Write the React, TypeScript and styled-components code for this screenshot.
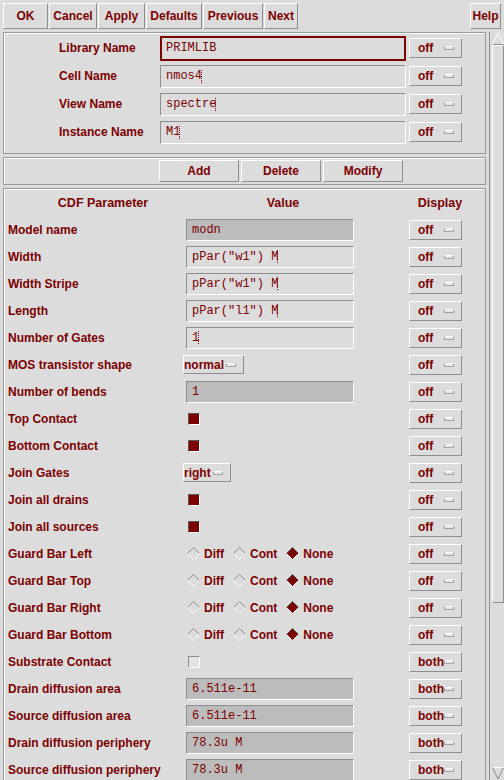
import React from "react"
import styled, { createGlobalStyle } from "styled-components"

const MAROON = "#7b0000"
const BG = "#dcdcdc"
const SHADE = "#8e8e8e"
const HILITE = "#ffffff"
const DISABLED = "#bcbcbc"

const GlobalStyle = createGlobalStyle`
  html, body {
    margin: 0;
    padding: 0;
    background: ${BG};
  }
  body {
    font-family: "Liberation Sans", Arial, sans-serif;
  }
`

const Window = styled.div`
  width: 504px;
  height: 780px;
  overflow: hidden;
  background: ${BG};
  color: ${MAROON};
  font: bold 12px "Liberation Sans", Arial, sans-serif;
  display: flex;
  flex-direction: column;
`

const Toolbar = styled.div`
  height: 32px;
  flex: none;
  box-sizing: border-box;
  display: flex;
  align-items: flex-start;
  gap: 1px;
  padding: 3px 3px 0 3px;
`

const Raised = styled.div`
  box-sizing: border-box;
  background: ${BG};
  border: 1px solid;
  border-color: ${HILITE} ${SHADE} ${SHADE} ${HILITE};
  color: ${MAROON};
  font: bold 12px "Liberation Sans", Arial, sans-serif;
`

const ToolButton = styled(Raised)<{ $w: number; $push?: boolean }>`
  width: ${(p) => p.$w}px;
  height: 26px;
  margin-left: ${(p) => (p.$push ? "auto" : "0")};
  display: flex;
  align-items: center;
  justify-content: center;
`

const Body = styled.div`
  flex: 1;
  min-height: 0;
  display: flex;
`

const Main = styled.div`
  width: 486px;
  box-sizing: border-box;
  padding-left: 3px;
  display: flex;
  flex-direction: column;
  gap: 3px;
`

const Panel = styled.div`
  box-sizing: border-box;
  border: 1px solid #9a9a9a;
  box-shadow: inset 1px 1px 0 ${HILITE};
`

const NamePanel = styled(Panel)`
  height: 122px;
  flex: none;
  padding-top: 1px;
  display: grid;
  grid-template-columns: 153px 246px 53px;
  grid-auto-rows: 28px;
  column-gap: 3px;
  align-items: center;
`

const NameLabel = styled.div`
  padding-left: 55px;
`

const ActionBar = styled(Panel)`
  height: 28px;
  flex: none;
  display: flex;
  align-items: center;
  gap: 2px;
  padding-left: 155px;
`

const ActionButton = styled(Raised)`
  width: 80px;
  height: 22px;
  display: flex;
  align-items: center;
  justify-content: center;
`

const ParamPanel = styled(Panel)`
  flex: 1;
  min-height: 0;
  border-bottom: none;
`

const HeaderRow = styled.div`
  height: 27px;
  display: flex;
  align-items: center;
  font-size: 12.5px;
`

const HeaderCell = styled.div<{ $w: number; $ml?: number }>`
  width: ${(p) => p.$w}px;
  margin-left: ${(p) => p.$ml ?? 0}px;
  text-align: center;
`

const ParamRow = styled.div`
  height: 27px;
  display: grid;
  grid-template-columns: 179px 226px 53px;
  align-items: center;
`

const ParamLabel = styled.div`
  padding-left: 4px;
  white-space: nowrap;
`

const ValueCell = styled.div`
  display: flex;
  align-items: center;
`

const TextField = styled.div<{ $w: number; $h: number; $disabled?: boolean; $focus?: boolean; $ml?: number }>`
  box-sizing: border-box;
  width: ${(p) => p.$w}px;
  height: ${(p) => p.$h}px;
  margin-left: ${(p) => p.$ml ?? 0}px;
  background: ${(p) => (p.$disabled ? DISABLED : BG)};
  border: ${(p) => (p.$focus ? `2px solid ${MAROON}` : "1px solid")};
  border-color: ${(p) => (p.$focus ? MAROON : `${SHADE} ${HILITE} ${HILITE} ${SHADE}`)};
  font: 12px "Liberation Mono", "Courier New", monospace;
  color: ${MAROON};
  padding-left: ${(p) => (p.$focus ? 4 : 5)}px;
  display: flex;
  align-items: center;
  white-space: pre;
`

const Caret = styled.span`
  display: inline-block;
  width: 0;
  height: 13px;
  margin-left: -1px;
  border-left: 1px dotted ${MAROON};
`

const MenuButton = styled(Raised)<{ $w: number; $h: number; $pad: number }>`
  width: ${(p) => p.$w}px;
  height: ${(p) => p.$h}px;
  display: flex;
  align-items: center;
  justify-content: space-between;
  padding: 0 7px 0 ${(p) => p.$pad}px;
`

const Indicator = styled.span`
  width: 10px;
  height: 4px;
  box-sizing: border-box;
  border: 1px solid #a2a2a2;
  border-top-color: ${HILITE};
  background: #e6e6e6;
`

const CheckBox = styled.span<{ $on: boolean }>`
  box-sizing: border-box;
  width: 12px;
  height: 12px;
  margin-left: 5px;
  border: 1px solid;
  border-color: ${(p) => (p.$on ? `#5a5a5a ${HILITE} ${HILITE} #5a5a5a` : `${SHADE} ${HILITE} ${HILITE} ${SHADE}`)};
  background: ${(p) => (p.$on ? MAROON : "#e4e4e4")};
`

const RadioGroup = styled.div`
  display: flex;
  align-items: center;
  margin-left: 4px;
`

const RadioItem = styled.span`
  display: flex;
  align-items: center;
  gap: 4px;
  margin-right: 9px;
`

const ScrollBar = styled.div`
  width: 15px;
  margin-left: 3px;
  box-sizing: border-box;
  border-left: 1px solid ${SHADE};
  padding-left: 2px;
  display: flex;
  flex-direction: column;
`

const Thumb = styled.div`
  height: 558px;
  box-sizing: border-box;
  border: 1px solid;
  border-color: ${HILITE} ${SHADE} ${SHADE} ${HILITE};
`

const Arrow = styled.svg`
  display: block;
  flex: none;
`

const Spacer = styled.div`
  flex: 1;
`

const Diamond: React.FC<{ on: boolean }> = ({ on }) => (
  <svg width="13" height="13" viewBox="0 0 13 13">
    <polygon points="6.5,0.5 12.5,6.5 6.5,12.5 0.5,6.5" fill={on ? MAROON : BG} />
    <polyline points="0.5,6.5 6.5,0.5 12.5,6.5" fill="none" stroke={on ? "#4a4a4a" : SHADE} strokeWidth="1" />
    <polyline points="12.5,6.5 6.5,12.5 0.5,6.5" fill="none" stroke={HILITE} strokeWidth="1" />
  </svg>
)

const DisplayMenu: React.FC<{ value: string }> = ({ value }) => (
  <MenuButton $w={53} $h={20} $pad={8}>
    <span>{value}</span>
    <Indicator />
  </MenuButton>
)

type Param =
  | { label: string; kind: "field"; value: string; disabled?: boolean; caret?: boolean; display: string }
  | { label: string; kind: "cycle"; value: string; w: number; display: string }
  | { label: string; kind: "check"; on: boolean; display: string }
  | { label: string; kind: "radio"; display: string }

const params: Param[] = [
  { label: "Model name", kind: "field", value: "modn", disabled: true, display: "off" },
  { label: "Width", kind: "field", value: 'pPar("w1") M', caret: true, display: "off" },
  { label: "Width Stripe", kind: "field", value: 'pPar("w1") M', caret: true, display: "off" },
  { label: "Length", kind: "field", value: 'pPar("l1") M', caret: true, display: "off" },
  { label: "Number of Gates", kind: "field", value: "1", caret: true, display: "off" },
  { label: "MOS transistor shape", kind: "cycle", value: "normal", w: 61, display: "off" },
  { label: "Number of bends", kind: "field", value: "1", disabled: true, display: "off" },
  { label: "Top Contact", kind: "check", on: true, display: "off" },
  { label: "Bottom Contact", kind: "check", on: true, display: "off" },
  { label: "Join Gates", kind: "cycle", value: "right", w: 48, display: "off" },
  { label: "Join all drains", kind: "check", on: true, display: "off" },
  { label: "Join all sources", kind: "check", on: true, display: "off" },
  { label: "Guard Bar Left", kind: "radio", display: "off" },
  { label: "Guard Bar Top", kind: "radio", display: "off" },
  { label: "Guard Bar Right", kind: "radio", display: "off" },
  { label: "Guard Bar Bottom", kind: "radio", display: "off" },
  { label: "Substrate Contact", kind: "check", on: false, display: "both" },
  { label: "Drain diffusion area", kind: "field", value: "6.511e-11", disabled: true, display: "both" },
  { label: "Source diffusion area", kind: "field", value: "6.511e-11", disabled: true, display: "both" },
  { label: "Drain diffusion periphery", kind: "field", value: "78.3u M", disabled: true, display: "both" },
  { label: "Source diffusion periphery", kind: "field", value: "78.3u M", disabled: true, display: "both" },
]

const renderValue = (p: Param) => {
  switch (p.kind) {
    case "field":
      return (
        <TextField $w={168} $h={22} $ml={3} $disabled={p.disabled}>
          {p.value}
          {p.caret && <Caret />}
        </TextField>
      )
    case "cycle":
      return (
        <MenuButton $w={p.w} $h={19} $pad={0}>
          <span>{p.value}</span>
          <Indicator />
        </MenuButton>
      )
    case "check":
      return <CheckBox $on={p.on} />
    case "radio":
      return (
        <RadioGroup>
          {["Diff", "Cont", "None"].map((o) => (
            <RadioItem key={o}>
              <Diamond on={o === "None"} />
              {o}
            </RadioItem>
          ))}
        </RadioGroup>
      )
  }
}

const names = [
  { label: "Library Name", value: "PRIMLIB", focus: true },
  { label: "Cell Name", value: "nmos4", caret: true },
  { label: "View Name", value: "spectre", caret: true },
  { label: "Instance Name", value: "M1", caret: true },
]

const App: React.FC = () => (
  <Window>
    <GlobalStyle />
    <Toolbar>
      <ToolButton $w={45}>OK</ToolButton>
      <ToolButton $w={48}>Cancel</ToolButton>
      <ToolButton $w={47}>Apply</ToolButton>
      <ToolButton $w={56}>Defaults</ToolButton>
      <ToolButton $w={60}>Previous</ToolButton>
      <ToolButton $w={34}>Next</ToolButton>
      <ToolButton $w={31} $push>
        Help
      </ToolButton>
    </Toolbar>
    <Body>
      <Main>
        <NamePanel>
          {names.map((n) => (
            <React.Fragment key={n.label}>
              <NameLabel>{n.label}</NameLabel>
              <TextField $w={246} $h={n.focus ? 25 : 23} $focus={n.focus}>
                {n.value}
                {n.caret && <Caret />}
              </TextField>
              <DisplayMenu value="off" />
            </React.Fragment>
          ))}
        </NamePanel>
        <ActionBar>
          <ActionButton>Add</ActionButton>
          <ActionButton>Delete</ActionButton>
          <ActionButton>Modify</ActionButton>
        </ActionBar>
        <ParamPanel>
          <HeaderRow>
            <HeaderCell $w={198}>CDF Parameter</HeaderCell>
            <HeaderCell $w={162}>Value</HeaderCell>
            <HeaderCell $w={62} $ml={45}>
              Display
            </HeaderCell>
          </HeaderRow>
          {params.map((p) => (
            <ParamRow key={p.label}>
              <ParamLabel>{p.label}</ParamLabel>
              <ValueCell>{renderValue(p)}</ValueCell>
              <DisplayMenu value={p.display} />
            </ParamRow>
          ))}
        </ParamPanel>
      </Main>
      <ScrollBar>
        <Arrow width="12" height="13" viewBox="0 0 12 13">
          <polyline points="0.5,12.5 6,1 11.5,12.5" fill="none" stroke={HILITE} />
          <line x1="0.5" y1="12.5" x2="11.5" y2="12.5" stroke={SHADE} />
        </Arrow>
        <Thumb />
        <Spacer />
        <Arrow width="12" height="13" viewBox="0 0 12 13">
          <polyline points="0.5,0.5 6,12 11.5,0.5" fill="none" stroke={SHADE} />
          <line x1="0.5" y1="0.5" x2="11.5" y2="0.5" stroke={HILITE} />
        </Arrow>
      </ScrollBar>
    </Body>
  </Window>
)

export default App
